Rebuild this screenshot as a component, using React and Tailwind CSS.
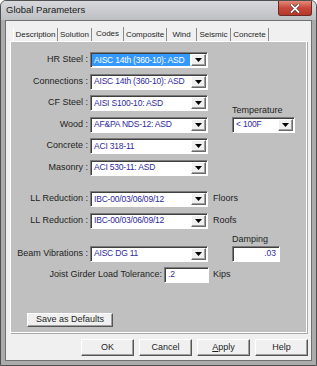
import React from 'react';

const font = { fontFamily: '"Liberation Sans", Arial, sans-serif' };

function Arrow() {
  return (
    <div className="w-[15px] h-full flex items-center justify-center bg-[#f0f0f0] border-t border-l border-t-white border-l-white border-r border-b border-r-[#6a6a6a] border-b-[#6a6a6a] shadow-[inset_-1px_-1px_0_#a0a0a0]">
      <svg width="7" height="4" viewBox="0 0 7 4">
        <path d="M0 0h7L3.5 4z" fill="#000" />
      </svg>
    </div>
  );
}

function Select({ value, width = 'w-[118px]', active = false }) {
  return (
    <div
      className={`${width} h-[16px] flex bg-white border-t border-l border-t-[#7a7a7a] border-l-[#7a7a7a] border-b border-r border-b-white border-r-white shadow-[inset_1px_1px_0_#404040] p-[1px]`}
    >
      <div
        className={`flex-1 flex items-center pl-[2px] mr-[1px] text-[8.5px] tracking-[-0.2px] whitespace-nowrap overflow-hidden ${
          active ? 'bg-[#3399ff] text-white' : 'text-[#2e2a9e]'
        }`}
      >
        {value}
      </div>
      <Arrow />
    </div>
  );
}

function Input({ value, width, right = false }) {
  return (
    <div
      className={`${width} h-[16px] flex items-center bg-white border-t border-l border-t-[#7a7a7a] border-l-[#7a7a7a] border-b border-r border-b-white border-r-white shadow-[inset_1px_1px_0_#404040] px-[3px] text-[8.5px] text-[#2e2a9e] ${
        right ? 'justify-end' : ''
      }`}
    >
      {value}
    </div>
  );
}

function Row({ label, value, active, children }) {
  return (
    <div className="flex items-center h-[16px]">
      <div className="w-[79px] text-right text-[9px] text-[#1e1e1e] whitespace-nowrap pr-[2px]">
        {label}
      </div>
      <Select value={value} active={active} />
      {children}
    </div>
  );
}

function Button({ children, className = '' }) {
  return (
    <div
      className={`h-[17px] flex items-center justify-center bg-[#f0f0f0] text-[9px] text-[#1e1e1e] border-t border-l border-t-white border-l-white border-r border-b border-r-[#555] border-b-[#555] shadow-[inset_-1px_-1px_0_#a0a0a0] ${className}`}
    >
      {children}
    </div>
  );
}

const tabs = [
  ['Description', 'w-[45px]'],
  ['Solution', 'w-[34px]'],
  ['Codes', 'w-[32px]'],
  ['Composite', 'w-[43px]'],
  ['Wind', 'w-[30px]'],
  ['Seismic', 'w-[34px]'],
  ['Concrete', 'w-[38px]'],
];

export default function App() {
  return (
    <div style={font} className="w-[317px] h-[366px] bg-[#ababab] border border-[#505050] rounded-t-[6px] flex flex-col overflow-hidden">
      {/* title bar */}
      <div className="h-[19px] flex items-center pl-[5px] relative bg-gradient-to-b from-[#d6d8dc] to-[#bdbfc3]">
        <span className="text-[9.5px] text-[#1a1a1a]">Global Parameters</span>
        <div className="absolute top-0 right-[4px] w-[34px] h-[15px] rounded-b-[3px] border border-t-0 border-[#6b2a22] bg-gradient-to-b from-[#e08a7c] via-[#c9473a] to-[#b4382a] flex items-center justify-center">
          <svg width="10" height="9" viewBox="0 0 10 9">
            <path d="M1.5 1l7 7M8.5 1l-7 7" stroke="#4a1a14" strokeWidth="3" strokeLinecap="square" />
            <path d="M1.5 1l7 7M8.5 1l-7 7" stroke="#fff" strokeWidth="1.8" strokeLinecap="square" />
          </svg>
        </div>
      </div>

      {/* client */}
      <div className="mx-[4px] h-[341px] bg-[#f0f0f0] border border-[#707070] flex flex-col">
        {/* tab strip */}
        <div className="flex items-end h-[20px] pl-[7px]">
          {tabs.map(([t, w]) => (
            <div
              key={t}
              className={`${w} flex items-center justify-center text-[8px] text-[#1e1e1e] whitespace-nowrap border-r border-r-[#8a8a8a] ${
                t === 'Codes' ? 'h-[14px]' : 'h-[13px]'
              } ${t === 'Description' ? 'border-l border-l-white' : ''}`}
            >
              {t}
            </div>
          ))}
        </div>

        {/* panel */}
        <div className="ml-[4px] w-[297px] h-[292px] bg-[#c0c0c0] border border-white shadow-[1px_1px_0_#a8a8a8] flex flex-col pt-[10px]">
          <div className="flex flex-col gap-[5.5px]">
            <Row label="HR Steel :" value="AISC 14th (360-10): ASD" active />
            <Row label="Connections :" value="AISC 14th (360-10): ASD" />
            <div className="flex items-end">
              <div className="flex flex-col gap-[5.5px]">
                <Row label="CF Steel :" value="AISI S100-10: ASD" />
                <Row label="Wood :" value="AF&PA NDS-12: ASD" />
              </div>
              <div className="ml-[24px] flex flex-col">
                <span className="text-[9px] text-[#1e1e1e] leading-[12px] mb-[1px]">Temperature</span>
                <Select value="< 100F" width="w-[63px]" />
              </div>
            </div>
            <Row label="Concrete :" value="ACI 318-11" />
            <Row label="Masonry :" value="ACI 530-11: ASD" />
          </div>

          <div className="flex flex-col gap-[5.5px] mt-[15.5px]">
            <Row label="LL Reduction :" value="IBC-00/03/06/09/12">
              <span className="ml-[5px] text-[9px] text-[#1e1e1e]">Floors</span>
            </Row>
            <Row label="LL Reduction :" value="IBC-00/03/06/09/12">
              <span className="ml-[5px] text-[9px] text-[#1e1e1e]">Roofs</span>
            </Row>
          </div>

          <div className="flex items-end mt-[4px]">
            <Row label="Beam Vibrations :" value="AISC DG 11" />
            <div className="ml-[24px] flex flex-col">
              <span className="text-[9px] text-[#1e1e1e] leading-[12px] mb-[1px]">Damping</span>
              <Input value=".03" width="w-[48px]" right />
            </div>
          </div>

          <div className="flex items-center h-[16px] mt-[5px]">
            <div className="w-[153px] text-right pr-[2px] text-[9px] text-[#1e1e1e] whitespace-nowrap">
              Joist Girder Load Tolerance:
            </div>
            <Input value=".2" width="w-[45px]" />
            <span className="ml-[4px] text-[9px] text-[#1e1e1e]">Kips</span>
          </div>

          <div className="mt-[30px] ml-[16px]">
            <Button className="w-[86px] !h-[14px]">Save as Defaults</Button>
          </div>
        </div>

        {/* bottom buttons */}
        <div className="flex gap-[5px] mt-[6px] pl-[75px]">
          <Button className="w-[53px]">OK</Button>
          <Button className="w-[53px]">Cancel</Button>
          <Button className="w-[53px]">
            <span className="underline">A</span>pply
          </Button>
          <Button className="w-[53px]">Help</Button>
        </div>
      </div>
    </div>
  );
}
